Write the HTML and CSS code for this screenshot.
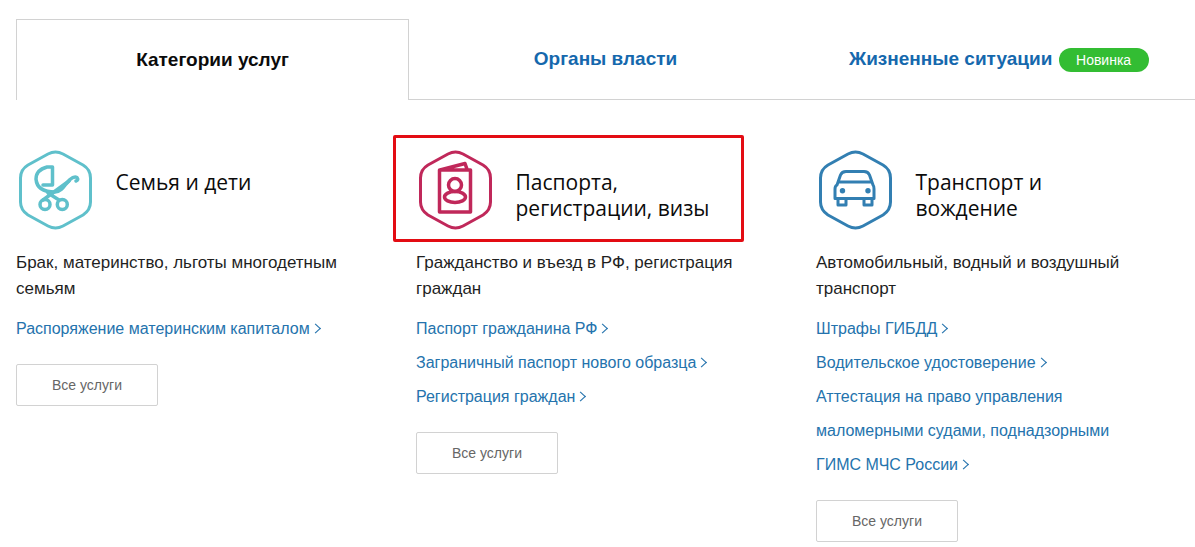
FILE: index.html
```html
<!DOCTYPE html>
<html lang="ru">
<head>
<meta charset="utf-8">
<title>Категории услуг</title>
<link rel="stylesheet" href="styles.css">
</head>
<body>
<nav class="tabs">
  <a class="tab tab-active">Категории услуг</a>
  <a class="tab">Органы власти</a>
  <a class="tab tab-last">Жизненные ситуации <span class="badge">Новинка</span></a>
</nav>
<main class="grid">
  <section class="col">
    <header class="head">
      <svg class="icon icon-teal" viewBox="0 0 76 80"><path class="hex" d="M30 4 Q37.500 0 45 4 L65 15 Q72.500 19.500 72.500 28 L72.500 52 Q72.500 60 65 65 L45 76 Q37.500 80 30 76 L10 65 Q2.500 60 2.500 52 L2.500 28 Q2.500 19.500 10 15 Z"/><path class="line thick" d="M29 17 L34.500 17 L34.500 35 L25 35 M29 17 Q18 20 18 29 Q19 42 37 42 C42 42 45 38 48 34 L52 29.500 Q56 26 59 27.500 Q61 30 58 31"/><path class="line thick" d="M25 50 L51 31 M30 43 L41 50"/><circle class="line thick" cx="27" cy="54.500" r="5"/><circle class="line thick" cx="44.300" cy="54.500" r="5"/></svg>
      <h2 class="title">Семья и дети</h2>
    </header>
    <p class="desc">Брак, материнство, льготы многодетным семьям</p>
    <ul class="links">
      <li><a class="arrow">Распоряжение материнским капиталом</a></li>
    </ul>
    <button class="btn">Все услуги</button>
  </section>
  <section class="col">
    <div class="highlight"></div>
    <header class="head">
      <svg class="icon icon-red" viewBox="0 0 76 80"><path class="hex" d="M30 4 Q37.500 0 45 4 L65 15 Q72.500 19.500 72.500 28 L72.500 52 Q72.500 60 65 65 L45 76 Q37.500 80 30 76 L10 65 Q2.500 60 2.500 52 L2.500 28 Q2.500 19.500 10 15 Z"/><path class="line thick" d="M21.500 20 L21.500 62 L52.500 62 L52.500 20 Z M22 20 L47 13.500 L49.300 20"/><circle class="line thick" cx="37" cy="35" r="6.500"/><ellipse class="line thick" cx="37" cy="47" rx="10.500" ry="5.500"/></svg>
      <h2 class="title">Паспорта, регистрации, визы</h2>
    </header>
    <p class="desc">Гражданство и въезд в РФ, регистрация граждан</p>
    <ul class="links">
      <li><a class="arrow">Паспорт гражданина РФ</a></li>
      <li><a class="arrow">Заграничный паспорт нового образца</a></li>
      <li><a class="arrow">Регистрация граждан</a></li>
    </ul>
    <button class="btn">Все услуги</button>
  </section>
  <section class="col">
    <header class="head">
      <svg class="icon icon-blue" viewBox="0 0 76 80"><path class="hex" d="M30 4 Q37.500 0 45 4 L65 15 Q72.500 19.500 72.500 28 L72.500 52 Q72.500 60 65 65 L45 76 Q37.500 80 30 76 L10 65 Q2.500 60 2.500 52 L2.500 28 Q2.500 19.500 10 15 Z"/><path class="line" d="M19 35 L22.500 25 Q24 21.500 28 21.500 L46 21.500 Q50 21.500 51.500 25 L55 35 M20 32 L54 32 M19 35 Q17 36 17 39 L17 48.500 L56 48.500 L56 39 Q56 36 55 35 M20 48.500 L20 55 L28 55 L28 48.500 M46 48.500 L46 55 L54 55 L54 48.500"/><circle class="dot" cx="24.500" cy="40.700" r="2.700"/><circle class="dot" cx="50" cy="40.700" r="2.700"/></svg>
      <h2 class="title">Транспорт и вождение</h2>
    </header>
    <p class="desc">Автомобильный, водный и воздушный транспорт</p>
    <ul class="links">
      <li><a class="arrow">Штрафы ГИБДД</a></li>
      <li><a class="arrow">Водительское удостоверение</a></li>
      <li><a>Аттестация на право управления маломерными судами, поднадзорными</a></li>
      <li><a class="arrow">ГИМС МЧС России</a></li>
    </ul>
    <button class="btn">Все услуги</button>
  </section>
</main>
</body>
</html>
```
FILE: styles.css
```css
* { box-sizing: border-box; }
html, body { margin: 0; padding: 0; background: #fff; }
body {
  width: 1195px;
  height: 547px;
  overflow: hidden;
  padding: 19px 0 0 16px;
  font-family: "Liberation Sans", Arial, sans-serif;
  color: #0b0b0b;
}
.tabs {
  display: flex;
  height: 81px;
  border-bottom: 1px solid #d2d2d2;
}
.tab {
  width: 393px;
  display: flex;
  align-items: center;
  justify-content: center;
  font-size: 19px;
  font-weight: 700;
  color: #1568ad;
  padding-bottom: 1px;
}
.tab-active {
  color: #0b0b0b;
  background: #fff;
  border: 1px solid #d2d2d2;
  border-bottom: 0;
  height: 81px;
}
.tab-last {
  width: auto;
  flex: 1;
  justify-content: flex-start;
  padding-left: 47px;
  white-space: pre;
}
.badge {
  display: inline-block;
  margin: 3px 0 0 1px;
  width: 90px;
  height: 24px;
  line-height: 24px;
  border-radius: 12px;
  background: #33bd33;
  color: #fff;
  font-size: 14px;
  font-weight: 400;
  text-align: center;
}
.grid {
  display: grid;
  grid-template-columns: repeat(3, 400px);
  padding-top: 50px;
}
.col { position: relative; padding-right: 60px; }
.highlight {
  position: absolute;
  left: -23px;
  top: -15px;
  width: 351px;
  height: 107px;
  border: 3px solid #e30c13;
  border-radius: 2px;
  pointer-events: none;
}
.head {
  display: flex;
  align-items: flex-start;
  height: 80px;
  gap: 21.500px;
}
.icon { width: 76px; height: 80px; flex: none; margin-left: 2px; }
.hex { fill: none; stroke-width: 3; stroke-linejoin: round; }
.line { fill: none; stroke-width: 3; stroke-linejoin: round; stroke-linecap: round; }
.thick { stroke-width: 3.5; }
.icon-teal .hex, .icon-teal .line { stroke: #5fc0cb; }
.icon-red .hex, .icon-red .line { stroke: #c0285a; }
.icon-blue .hex, .icon-blue .line { stroke: #327fb2; }
.dot { fill: #327fb2; }
.title {
  margin: 0;
  max-width: 200px;
  padding-top: 19px;
  font-family: "Open Sans", sans-serif;
  font-size: 21px;
  font-weight: 400;
  line-height: 26px;
  color: #0b0b0b;
}
.desc {
  margin: 20px 0 0;
  font-size: 17px;
  line-height: 26px;
  color: #1f1f1f;
}
.links {
  list-style: none;
  margin: 10px 0 0;
  padding: 0;
  font-size: 16px;
  line-height: 34px;
  color: #2473ad;
}
.arrow::after {
  content: "";
  display: inline-block;
  width: 6px;
  height: 6px;
  margin-left: 2px;
  vertical-align: 2px;
  border-top: 1px solid #2473ad;
  border-right: 1px solid #2473ad;
  transform: scale(1.100, 1) rotate(45deg);
}
.btn {
  display: block;
  width: 142px;
  height: 42px;
  margin-top: 18px;
  background: #fff;
  border: 1px solid #d2d2d2;
  border-radius: 2px;
  font-family: inherit;
  font-size: 14px;
  color: #666;
}
```
